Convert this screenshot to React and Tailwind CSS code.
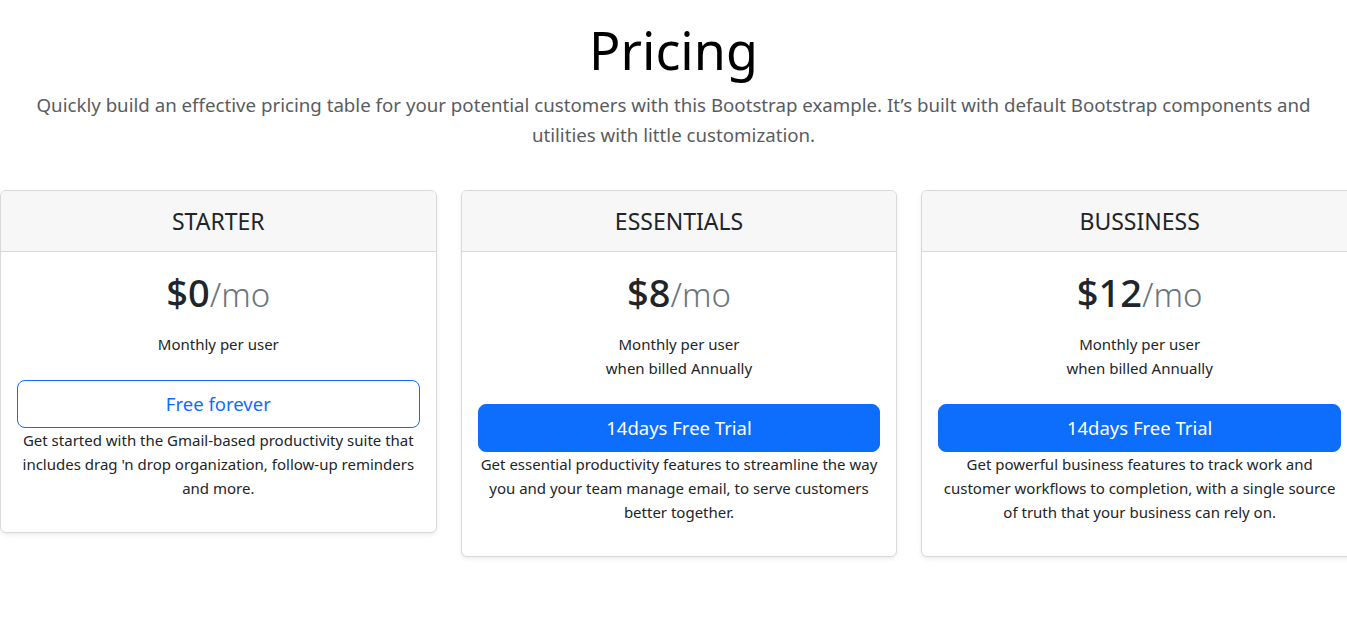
import React from "react";

const plans = [
  {
    name: "STARTER",
    price: "$0",
    notes: ["Monthly per user"],
    button: "Free forever",
    outline: true,
    text: [
      "Get started with the Gmail-based productivity suite that",
      "includes drag 'n drop organization, follow-up reminders",
      "and more.",
    ],
  },
  {
    name: "ESSENTIALS",
    price: "$8",
    notes: ["Monthly per user", "when billed Annually"],
    button: "14days Free Trial",
    text: [
      "Get essential productivity features to streamline the way",
      "you and your team manage email, to serve customers",
      "better together.",
    ],
  },
  {
    name: "BUSSINESS",
    price: "$12",
    notes: ["Monthly per user", "when billed Annually"],
    button: "14days Free Trial",
    text: [
      "Get powerful business features to track work and",
      "customer workflows to completion, with a single source",
      "of truth that your business can rely on.",
    ],
  },
];

const PlanCard = ({ plan }) => (
  <div className="flex flex-col self-start overflow-hidden rounded-md border border-[#d9d9d9] bg-white text-center shadow-[0_2px_4px_rgba(0,0,0,0.075)]">
    {/* Card header */}
    <div className="border-b border-[#d9d9d9] bg-[#f7f7f7] py-4">
      <h4 className="text-[23px] leading-[28px] font-normal text-[#212529]">{plan.name}</h4>
    </div>

    {/* Card body */}
    <div className="p-4">
      <h1 className="text-[38px] leading-[48px] font-medium text-[#212529]">
        {plan.price}
        <small className="text-[33px] font-light text-[#6c757d]">/mo</small>
      </h1>
      <ul className="mt-[13px] mb-6 text-[15px] leading-6 text-[#212529]">
        {plan.notes.map((n) => (
          <li key={n}>{n}</li>
        ))}
      </ul>
      <button
        className={
          plan.outline
            ? "h-12 w-full rounded-lg border border-[#0d6efd] bg-white text-[18.5px] text-[#0d6efd]"
            : "h-12 w-full rounded-lg border border-[#0d6efd] bg-[#0d6efd] text-[18.5px] text-white"
        }
      >
        {plan.button}
      </button>
      <p className="mb-4 text-[15px] leading-6 whitespace-nowrap text-[#212529]">
        {plan.text.map((t) => (
          <span key={t} className="block">
            {t}
          </span>
        ))}
      </p>
    </div>
  </div>
);

const App = () => {
  return (
    <div className="min-h-screen w-full overflow-hidden bg-white font-['Segoe_UI','Noto_Sans',sans-serif]">
      {/* Heading */}
      <div className="pt-[18px] text-center">
        <h1 className="mb-2 text-[52px] leading-[64px] font-normal text-black">Pricing</h1>
        <p className="text-[18.7px] leading-[30px] whitespace-nowrap text-[#595c5f]">
          Quickly build an effective pricing table for your potential customers with this Bootstrap example. It’s built with default Bootstrap components and
          <br />
          utilities with little customization.
        </p>
      </div>

      {/* Cards */}
      <div className="mt-10 grid w-[1358px] grid-cols-3 gap-6">
        {plans.map((p) => (
          <PlanCard key={p.name} plan={p} />
        ))}
      </div>
    </div>
  );
};

export default App;
